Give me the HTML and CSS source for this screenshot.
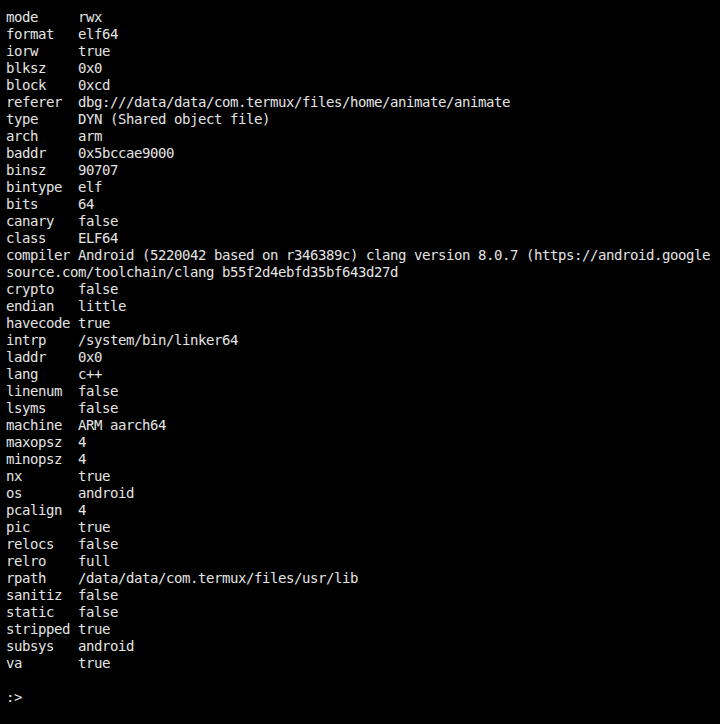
FILE: index.html
```html
<!DOCTYPE html>
<html>
<head>
<meta charset="utf-8">
<link rel="stylesheet" href="styles.css">
</head>
<body>
<pre class="term">mode     rwx
format   elf64
iorw     true
blksz    0x0
block    0xcd
referer  dbg:///data/data/com.termux/files/home/animate/animate
type     DYN (Shared object file)
arch     arm
baddr    0x5bccae9000
binsz    90707
bintype  elf
bits     64
canary   false
class    ELF64
compiler Android (5220042 based on r346389c) clang version 8.0.7 (https://android.google
source.com/toolchain/clang b55f2d4ebfd35bf643d27d
crypto   false
endian   little
havecode true
intrp    /system/bin/linker64
laddr    0x0
lang     c++
linenum  false
lsyms    false
machine  ARM aarch64
maxopsz  4
minopsz  4
nx       true
os       android
pcalign  4
pic      true
relocs   false
relro    full
rpath    /data/data/com.termux/files/usr/lib
sanitiz  false
static   false
stripped true
subsys   android
va       true

:></pre>
</body>
</html>
```

FILE: styles.css
```css
html, body {
  margin: 0;
  padding: 0;
  background: #000;
  height: 100%;
}
.term {
  margin: 0;
  padding: 9px 0 0 6px;
  font-family: "DejaVu Sans Mono", "Liberation Mono", monospace;
  font-size: 14px;
  letter-spacing: -0.43px;
  line-height: 17px;
  color: #e4e4e4;
  white-space: pre;
}
```
